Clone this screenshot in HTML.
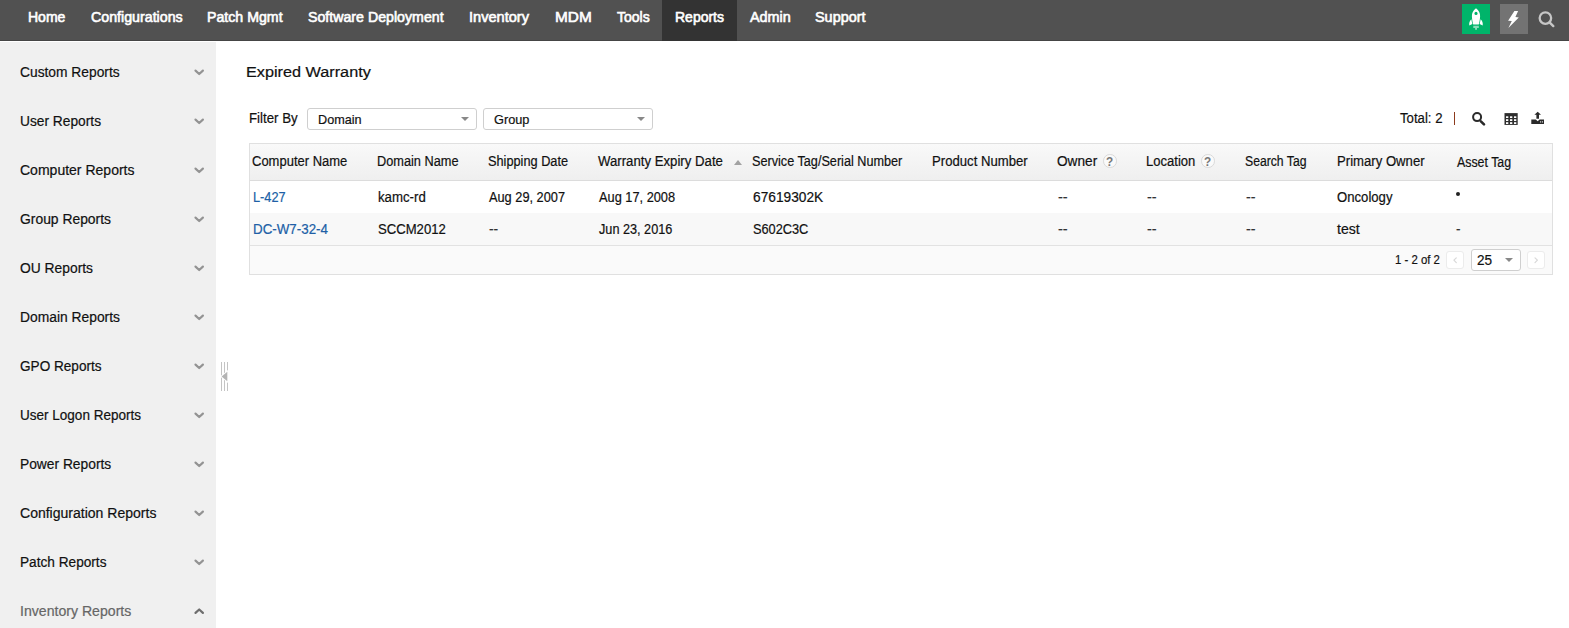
<!DOCTYPE html>
<html><head><meta charset="utf-8"><title>Expired Warranty</title>
<style>
html,body{margin:0;padding:0;}
body{width:1569px;height:628px;overflow:hidden;background:#fff;position:relative;font-family:"Liberation Sans",sans-serif;}
.t{-webkit-text-stroke:0.2px currentColor;position:absolute;white-space:pre;line-height:20px;transform-origin:0 50%;display:block;}
.abs{position:absolute;}
#nav{left:0;top:0;width:1569px;height:40px;background:#515151;border-bottom:1px solid #454545;}
#navactive{left:662px;top:0;width:75px;height:41px;background:#333;}
#side{left:0;top:42px;width:216px;height:586px;background:#f0f0f0;}
.sel{border:1px solid #cfcfcf;border-radius:3px;background:#fff;box-sizing:border-box;}
.arr{width:0;height:0;border-left:4px solid transparent;border-right:4px solid transparent;border-top:4px solid #888;}
#tbl{left:249px;top:143px;width:1304px;height:132px;box-sizing:border-box;border:1px solid #e0e0e0;}
#thead{left:250px;top:144px;width:1302px;height:36px;background:linear-gradient(#f9f9f9,#efefef);border-bottom:1px solid #dcdcdc;}
#row2{left:250px;top:213px;width:1302px;height:32px;background:#f8f8f8;}
#tfoot{left:250px;top:245px;width:1302px;height:28px;background:#fafafa;border-top:1px solid #e2e2e2;}
.pbtn{border:1px solid #ececec;border-radius:3px;background:#fff;box-sizing:border-box;width:18px;height:18px;}
.help{width:13.6px;height:13.6px;box-sizing:border-box;border:1px solid #d9d9d9;border-radius:50%;background:#fafafa;color:#8a8a8a;font-size:10px;font-weight:700;line-height:12px;text-align:center;}
</style></head>
<body>
<div id="nav" class="abs"></div>
<div id="navactive" class="abs"></div>
<div id="side" class="abs"></div>
<div id="tbl" class="abs"></div>
<div id="thead" class="abs"></div>
<div id="row2" class="abs"></div>
<div id="tfoot" class="abs"></div>
<!-- top-right icons -->
<div class="abs" style="left:1462px;top:4px;width:28px;height:30px;background:#00b46a;"></div>
<div class="abs" style="left:1500px;top:4px;width:28px;height:30px;background:#737373;"></div>
<svg class="abs" style="left:1440px;top:0" width="129" height="41" viewBox="1440 0 129 41">
  <!-- rocket -->
  <path d="M1476 8.2 C1473 10.3 1471.8 13.3 1471.9 16.3 C1472 19.5 1472.6 22.3 1473.2 24.5 L1478.8 24.5 C1479.4 22.3 1480 19.5 1480.1 16.3 C1480.2 13.3 1479 10.3 1476 8.2 Z" fill="#fff"/>
  <circle cx="1476" cy="13.4" r="1.55" fill="#00b46a"/>
  <path d="M1471.4 19.2 C1469.6 20.6 1469 22.9 1469.3 25.4 L1472.4 23.9 C1471.9 22.3 1471.6 20.8 1471.4 19.2 Z" fill="#fff"/>
  <path d="M1480.6 19.2 C1482.4 20.6 1483 22.9 1482.7 25.4 L1479.6 23.9 C1480.1 22.3 1480.4 20.8 1480.6 19.2 Z" fill="#fff"/>
  <path d="M1473.3 25.8 H1478.8 V27.9 H1477 V29.8 H1475.1 V27.9 H1473.3 Z" fill="#fff" opacity="0.55"/>
  <!-- bolt -->
  <path d="M1514.4 10.9 L1518.1 10.9 L1515.4 17 L1518.8 17.5 L1508.4 27.9 L1511.8 21 L1508.1 20.7 Z" fill="#fff"/>
  <!-- search -->
  <circle cx="1545.4" cy="18.1" r="5.75" fill="none" stroke="#c6c6c6" stroke-width="2.3"/>
  <path d="M1549.8 22.6 L1553.3 26.1" stroke="#c6c6c6" stroke-width="2.4" stroke-linecap="round"/>
</svg>

<!-- sidebar chevrons -->
<svg class="abs" style="left:190px;top:42px" width="20" height="586" viewBox="190 42 20 586" fill="none" stroke="#939393" stroke-width="2.2" stroke-linecap="round" stroke-linejoin="round">
  <path d="M195.5 70.6 L199.2 74.0 L202.9 70.6"/>
  <path d="M195.5 119.6 L199.2 123.0 L202.9 119.6"/>
  <path d="M195.5 168.6 L199.2 172.0 L202.9 168.6"/>
  <path d="M195.5 217.6 L199.2 221.0 L202.9 217.6"/>
  <path d="M195.5 266.6 L199.2 270.0 L202.9 266.6"/>
  <path d="M195.5 315.6 L199.2 319.0 L202.9 315.6"/>
  <path d="M195.5 364.6 L199.2 368.0 L202.9 364.6"/>
  <path d="M195.5 413.6 L199.2 417.0 L202.9 413.6"/>
  <path d="M195.5 462.6 L199.2 466.0 L202.9 462.6"/>
  <path d="M195.5 511.6 L199.2 515.0 L202.9 511.6"/>
  <path d="M195.5 560.6 L199.2 564.0 L202.9 560.6"/>
  <path d="M195.5 612.9 L199.2 609.5 L202.9 612.9" stroke="#6e6e6e"/>
</svg>

<!-- splitter -->
<svg class="abs" style="left:219px;top:360px" width="12" height="34" viewBox="219 360 12 34">
  <g stroke="#c4c4c4" stroke-width="1">
    <path d="M221.5 362 V391 M224.5 362 V391 M227.5 362 V391"/>
  </g>
  <path d="M221.6 376.5 L227.3 371.8 L227.3 381.2 Z" fill="#b4b4b4" stroke="#fff" stroke-width="2" paint-order="stroke"/>
</svg>

<!-- filter selects -->
<div class="abs sel" style="left:307px;top:108px;width:170px;height:22px;"></div>
<div class="abs arr" style="left:461px;top:117px;"></div>
<div class="abs sel" style="left:483px;top:108px;width:170px;height:22px;"></div>
<div class="abs arr" style="left:637px;top:117px;"></div>

<!-- toolbar right -->
<div class="abs" style="left:1454px;top:112px;width:1px;height:13px;background:#8c3a1c;"></div>
<svg class="abs" style="left:1468px;top:108px" width="84" height="22" viewBox="1468 108 84 22">
  <circle cx="1477.1" cy="117.1" r="4.0" fill="none" stroke="#2a2a2a" stroke-width="2"/>
  <path d="M1480.9 121.3 L1484 124.4" stroke="#2a2a2a" stroke-width="2.6" stroke-linecap="round"/>
  <!-- table -->
  <rect x="1504.5" y="113.1" width="13.2" height="11.8" fill="#2e2e2e"/>
  <g fill="#fff">
    <rect x="1506" y="116.3" width="2.3" height="1.7"/><rect x="1510" y="116.3" width="2.3" height="1.7"/><rect x="1514" y="116.3" width="2.3" height="1.7"/>
    <rect x="1506" y="119.2" width="2.3" height="1.8"/><rect x="1510" y="119.2" width="2.3" height="1.8"/><rect x="1514" y="119.2" width="2.3" height="1.8"/>
    <rect x="1506" y="122.2" width="2.3" height="1.8"/><rect x="1510" y="122.2" width="2.3" height="1.8"/><rect x="1514" y="122.2" width="2.3" height="1.8"/>
  </g>
  <!-- upload -->
  <path d="M1537.7 111.7 L1541 114.8 L1539 114.8 L1539 118.8 L1536.4 118.8 L1536.4 114.8 L1534.4 114.8 Z" fill="#2a2a2a"/>
  <path d="M1531.3 119.4 L1535.8 119.4 L1537.7 121.2 L1539.6 119.4 L1544 119.4 L1544 123.9 L1531.3 123.9 Z" fill="#2a2a2a"/>
  <rect x="1540" y="121.3" width="1.1" height="1.2" fill="#ddd"/><rect x="1541.9" y="121.3" width="1.1" height="1.2" fill="#ddd"/>
</svg>

<!-- sort arrow -->
<div class="abs" style="left:734px;top:160px;width:0;height:0;border-left:4.5px solid transparent;border-right:4.5px solid transparent;border-bottom:5px solid #a2a2a2;"></div>

<!-- help icons -->
<div class="abs help" style="left:1103.2px;top:154.2px;"></div>
<div class="abs help" style="left:1201.2px;top:154.2px;"></div>

<!-- asset tag bullet -->
<div class="abs" style="left:1456.1px;top:192.2px;width:4px;height:4px;border-radius:50%;background:#222;"></div>

<!-- pagination -->
<div class="abs pbtn" style="left:1446px;top:251px;"></div>
<div class="abs pbtn" style="left:1527px;top:251px;"></div>
<div class="abs sel" style="left:1471px;top:249px;width:50px;height:22px;"></div>
<div class="abs arr" style="left:1505px;top:258px;"></div>
<svg class="abs" style="left:1446px;top:251px" width="100" height="18" viewBox="1446 251 100 18" fill="none" stroke="#d8d8d8" stroke-width="1.2" stroke-linecap="round" stroke-linejoin="round">
  <path d="M1456.3 257.8 L1453.9 260.2 L1456.3 262.6"/>
  <path d="M1535 257.8 L1537.4 260.2 L1535 262.6"/>
</svg>

<nav>
<span class="t" style="left:27.9px;top:7.0px;font-size:14px;line-height:20px;font-weight:400;color:#fff;transform:scaleX(1.0011);-webkit-text-stroke:0.6px #fff;">Home</span>
<span class="t" style="left:90.6px;top:7.0px;font-size:14px;line-height:20px;font-weight:400;color:#fff;transform:scaleX(1.0157);-webkit-text-stroke:0.6px #fff;">Configurations</span>
<span class="t" style="left:207.3px;top:7.0px;font-size:14px;line-height:20px;font-weight:400;color:#fff;transform:scaleX(1.0120);-webkit-text-stroke:0.6px #fff;">Patch Mgmt</span>
<span class="t" style="left:307.7px;top:7.0px;font-size:14px;line-height:20px;font-weight:400;color:#fff;transform:scaleX(1.0131);-webkit-text-stroke:0.6px #fff;">Software Deployment</span>
<span class="t" style="left:469.1px;top:7.0px;font-size:14px;line-height:20px;font-weight:400;color:#fff;transform:scaleX(1.0418);-webkit-text-stroke:0.6px #fff;">Inventory</span>
<span class="t" style="left:554.6px;top:7.0px;font-size:14px;line-height:20px;font-weight:400;color:#fff;transform:scaleX(1.0976);-webkit-text-stroke:0.6px #fff;">MDM</span>
<span class="t" style="left:616.8px;top:7.0px;font-size:14px;line-height:20px;font-weight:400;color:#fff;transform:scaleX(1.0004);-webkit-text-stroke:0.6px #fff;">Tools</span>
<span class="t" style="left:675.0px;top:7.0px;font-size:14px;line-height:20px;font-weight:400;color:#fff;transform:scaleX(0.9994);-webkit-text-stroke:0.6px #fff;">Reports</span>
<span class="t" style="left:749.5px;top:7.0px;font-size:14px;line-height:20px;font-weight:400;color:#fff;transform:scaleX(1.0280);-webkit-text-stroke:0.6px #fff;">Admin</span>
<span class="t" style="left:815.3px;top:7.0px;font-size:14px;line-height:20px;font-weight:400;color:#fff;transform:scaleX(1.0296);-webkit-text-stroke:0.6px #fff;">Support</span>
</nav>
<aside>
<span class="t" style="left:19.8px;top:62.0px;font-size:14px;line-height:20px;font-weight:400;color:#111;transform:scaleX(0.9856);">Custom Reports</span>
<span class="t" style="left:19.8px;top:111.0px;font-size:14px;line-height:20px;font-weight:400;color:#111;transform:scaleX(0.9822);">User Reports</span>
<span class="t" style="left:19.8px;top:160.0px;font-size:14px;line-height:20px;font-weight:400;color:#111;transform:scaleX(1.0010);">Computer Reports</span>
<span class="t" style="left:19.8px;top:209.0px;font-size:14px;line-height:20px;font-weight:400;color:#111;transform:scaleX(0.9910);">Group Reports</span>
<span class="t" style="left:19.8px;top:258.0px;font-size:14px;line-height:20px;font-weight:400;color:#111;transform:scaleX(0.9875);">OU Reports</span>
<span class="t" style="left:19.8px;top:307.0px;font-size:14px;line-height:20px;font-weight:400;color:#111;transform:scaleX(0.9886);">Domain Reports</span>
<span class="t" style="left:19.8px;top:356.0px;font-size:14px;line-height:20px;font-weight:400;color:#111;transform:scaleX(0.9711);">GPO Reports</span>
<span class="t" style="left:19.8px;top:405.0px;font-size:14px;line-height:20px;font-weight:400;color:#111;transform:scaleX(0.9657);">User Logon Reports</span>
<span class="t" style="left:19.8px;top:454.0px;font-size:14px;line-height:20px;font-weight:400;color:#111;transform:scaleX(0.9849);">Power Reports</span>
<span class="t" style="left:19.8px;top:503.0px;font-size:14px;line-height:20px;font-weight:400;color:#111;transform:scaleX(1.0016);">Configuration Reports</span>
<span class="t" style="left:19.8px;top:552.0px;font-size:14px;line-height:20px;font-weight:400;color:#111;transform:scaleX(0.9750);">Patch Reports</span>
<span class="t" style="left:19.8px;top:601.0px;font-size:14px;line-height:20px;font-weight:400;color:#666;transform:scaleX(1.0072);">Inventory Reports</span>
</aside>
<main>
<span class="t" style="left:245.8px;top:61.0px;font-size:15.5px;line-height:21px;font-weight:400;color:#111;transform:scaleX(1.0474);">Expired Warranty</span>
<span class="t" style="left:249.4px;top:108.0px;font-size:14px;line-height:20px;font-weight:400;color:#111;transform:scaleX(0.9485);">Filter By</span>
<span class="t" style="left:318.0px;top:110.0px;font-size:13px;line-height:19px;font-weight:400;color:#111;transform:scaleX(0.9733);">Domain</span>
<span class="t" style="left:493.9px;top:110.0px;font-size:13px;line-height:19px;font-weight:400;color:#111;transform:scaleX(0.9795);">Group</span>
<span class="t" style="left:1400.2px;top:108.0px;font-size:14px;line-height:20px;font-weight:400;color:#111;transform:scaleX(0.9415);">Total: 2</span>
<span class="t" style="left:252.0px;top:151.0px;font-size:14px;line-height:20px;font-weight:400;color:#111;transform:scaleX(0.9279);">Computer Name</span>
<span class="t" style="left:377.3px;top:151.0px;font-size:14px;line-height:20px;font-weight:400;color:#111;transform:scaleX(0.9108);">Domain Name</span>
<span class="t" style="left:488.1px;top:151.0px;font-size:14px;line-height:20px;font-weight:400;color:#111;transform:scaleX(0.9107);">Shipping Date</span>
<span class="t" style="left:598.2px;top:151.0px;font-size:14px;line-height:20px;font-weight:400;color:#111;transform:scaleX(0.9425);">Warranty Expiry Date</span>
<span class="t" style="left:752.0px;top:151.0px;font-size:14px;line-height:20px;font-weight:400;color:#111;transform:scaleX(0.9040);">Service Tag/Serial Number</span>
<span class="t" style="left:932.3px;top:151.0px;font-size:14px;line-height:20px;font-weight:400;color:#111;transform:scaleX(0.9388);">Product Number</span>
<span class="t" style="left:1056.9px;top:151.0px;font-size:14px;line-height:20px;font-weight:400;color:#111;transform:scaleX(0.9749);">Owner</span>
<span class="t" style="left:1146.3px;top:151.0px;font-size:14px;line-height:20px;font-weight:400;color:#111;transform:scaleX(0.9313);">Location</span>
<span class="t" style="left:1244.8px;top:151.0px;font-size:14px;line-height:20px;font-weight:400;color:#111;transform:scaleX(0.8714);">Search Tag</span>
<span class="t" style="left:1336.5px;top:151.0px;font-size:14px;line-height:20px;font-weight:400;color:#111;transform:scaleX(0.9383);">Primary Owner</span>
<span class="t" style="left:1106.2px;top:152.0px;font-size:13px;line-height:19px;font-weight:700;color:#777;transform:scaleX(0.9053);-webkit-text-stroke:0;">?</span>
<span class="t" style="left:1204.2px;top:152.0px;font-size:13px;line-height:19px;font-weight:700;color:#777;transform:scaleX(0.9053);-webkit-text-stroke:0;">?</span>
<span class="t" style="left:1457.2px;top:152.0px;font-size:14px;line-height:20px;font-weight:400;color:#111;transform:scaleX(0.8835);">Asset Tag</span>
<span class="t" style="left:253.0px;top:187.0px;font-size:14px;line-height:20px;font-weight:400;color:#205fa6;transform:scaleX(0.9131);">L-427</span>
<span class="t" style="left:377.9px;top:187.0px;font-size:14px;line-height:20px;font-weight:400;color:#111;transform:scaleX(0.9454);">kamc-rd</span>
<span class="t" style="left:489.1px;top:187.0px;font-size:14px;line-height:20px;font-weight:400;color:#111;transform:scaleX(0.9124);">Aug 29, 2007</span>
<span class="t" style="left:599.2px;top:187.0px;font-size:14px;line-height:20px;font-weight:400;color:#111;transform:scaleX(0.9136);">Aug 17, 2008</span>
<span class="t" style="left:753.1px;top:187.0px;font-size:14px;line-height:20px;font-weight:400;color:#111;transform:scaleX(0.9799);">67619302K</span>
<span class="t" style="left:1057.9px;top:187.0px;font-size:14px;line-height:20px;font-weight:400;color:#333;transform:scaleX(1.0399);">--</span>
<span class="t" style="left:1147.1px;top:187.0px;font-size:14px;line-height:20px;font-weight:400;color:#333;transform:scaleX(1.0291);">--</span>
<span class="t" style="left:1245.8px;top:187.0px;font-size:14px;line-height:20px;font-weight:400;color:#333;transform:scaleX(1.0184);">--</span>
<span class="t" style="left:1337.1px;top:187.0px;font-size:14px;line-height:20px;font-weight:400;color:#111;transform:scaleX(0.9382);">Oncology</span>
<span class="t" style="left:253.0px;top:219.0px;font-size:14px;line-height:20px;font-weight:400;color:#205fa6;transform:scaleX(0.9545);">DC-W7-32-4</span>
<span class="t" style="left:377.9px;top:219.0px;font-size:14px;line-height:20px;font-weight:400;color:#111;transform:scaleX(0.9368);">SCCM2012</span>
<span class="t" style="left:489.1px;top:219.0px;font-size:14px;line-height:20px;font-weight:400;color:#333;transform:scaleX(0.9863);">--</span>
<span class="t" style="left:599.2px;top:219.0px;font-size:14px;line-height:20px;font-weight:400;color:#111;transform:scaleX(0.9053);">Jun 23, 2016</span>
<span class="t" style="left:753.1px;top:219.0px;font-size:14px;line-height:20px;font-weight:400;color:#111;transform:scaleX(0.9110);">S602C3C</span>
<span class="t" style="left:1057.9px;top:219.0px;font-size:14px;line-height:20px;font-weight:400;color:#333;transform:scaleX(1.0399);">--</span>
<span class="t" style="left:1147.1px;top:219.0px;font-size:14px;line-height:20px;font-weight:400;color:#333;transform:scaleX(1.0291);">--</span>
<span class="t" style="left:1245.8px;top:219.0px;font-size:14px;line-height:20px;font-weight:400;color:#333;transform:scaleX(1.0184);">--</span>
<span class="t" style="left:1337.1px;top:219.0px;font-size:14px;line-height:20px;font-weight:400;color:#111;transform:scaleX(1.0054);">test</span>
<span class="t" style="left:1455.6px;top:219.0px;font-size:14px;line-height:20px;font-weight:400;color:#333;transform:scaleX(0.9632);">-</span>
<span class="t" style="left:1394.9px;top:250.0px;font-size:13px;line-height:19px;font-weight:400;color:#111;transform:scaleX(0.8750);">1 - 2 of 2</span>
<span class="t" style="left:1477.2px;top:250.0px;font-size:14px;line-height:20px;font-weight:400;color:#111;transform:scaleX(0.9693);">25</span>
</main>
</body></html>
